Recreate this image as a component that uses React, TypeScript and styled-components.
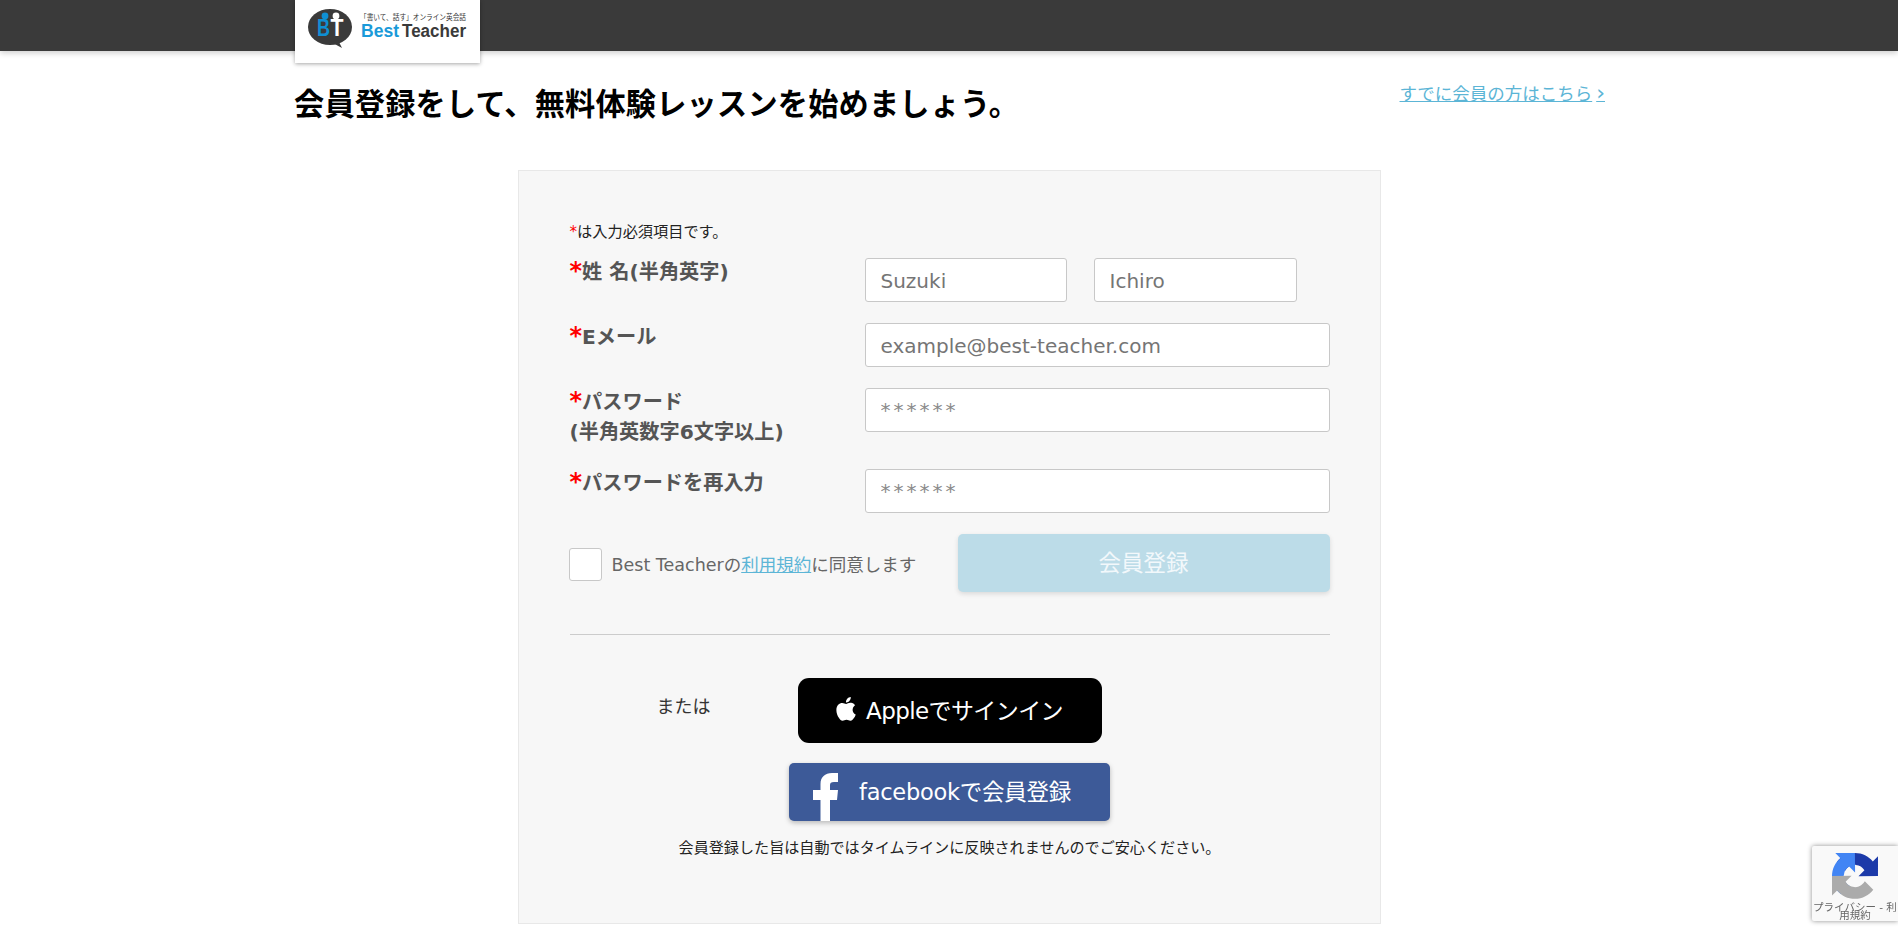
import React from "react";
import styled, { createGlobalStyle } from "styled-components";

const FONT = `"DejaVu Sans", "Noto Sans CJK JP", sans-serif`;

const Global = createGlobalStyle`
  html, body { margin: 0; padding: 0; background: #fff; height: 929px; overflow: hidden; }
  body { font-family: ${FONT}; color: #111; }
  * { box-sizing: border-box; }
`;

const Header = styled.header`
  height: 51px;
  background: #3a3a3a;
  box-shadow: 0 2px 6px rgba(0, 0, 0, 0.2);
`;
const HeaderInner = styled.div`
  width: 1310px;
  margin: 0 auto;
  padding-left: 1px;
`;
const LogoBox = styled.div`
  width: 185px;
  height: 63px;
  background: #fff;
  box-shadow: 0 1px 4px rgba(0, 0, 0, 0.35);
  position: relative;
`;
const Page = styled.main`
  width: 1310px;
  margin: 0 auto;
`;
const TitleRow = styled.div`
  display: flex;
  justify-content: space-between;
  align-items: flex-start;
  height: 119px;
`;
const Title = styled.h1`
  margin: 35px 0 0;
  font-size: 30.2px;
  letter-spacing: 0.2px;
  line-height: 38px;
  font-weight: 700;
  color: #000;
`;
const LoginLink = styled.a`
  margin-top: 31px;
  margin-right: -1px;
  font-size: 17.5px;
  line-height: 24px;
  color: #5cb5d6;
  text-decoration: underline;
`;
const Chevron = styled.span`
  margin-left: 4px;
  font-size: 22px;
  line-height: 0;
`;
const Card = styled.section`
  width: 863px;
  height: 754px;
  margin: 0 auto;
  padding: 50px 50px 0 51px;
  background: #f7f7f7;
  border: 1px solid #e8e8e8;
`;
const Note = styled.p`
  margin: 0 0 15px;
  font-size: 15.2px;
  line-height: 22px;
  color: #222;
`;
const Star = styled.span`
  color: #f00;
`;
const LabelStar = styled(Star)`
  font-size: 24px;
  line-height: 0;
`;
const Row = styled.div<{ $gap: number }>`
  display: grid;
  grid-template-columns: 295px 465px;
  margin-bottom: ${(p) => p.$gap}px;
`;
const Label = styled.label`
  margin-top: -1px;
  font-size: 20.2px;
  line-height: 30px;
  font-weight: 700;
  color: #555;
`;
const Inputs = styled.div`
  display: flex;
  gap: 27px;
`;
const Input = styled.input<{ $w?: number; $mask?: boolean }>`
  width: ${(p) => (p.$w ? `${p.$w}px` : "100%")};
  height: 44px;
  padding: ${(p) => (p.$mask ? "0 15px 1px" : "1px 15px 0")};
  font: 20px ${FONT};
  color: #555;
  background: #fff;
  border: 1px solid #c8c8c8;
  border-radius: 3px;
  outline: none;
  &::placeholder {
    color: ${(p) => (p.$mask ? "#8a8a8a" : "#757575")};
    opacity: 1;
    letter-spacing: ${(p) => (p.$mask ? "3px" : "0")};
  }
`;
const AgreeRow = styled.div`
  display: flex;
  align-items: center;
  justify-content: space-between;
  height: 58px;
`;
const Agree = styled.div`
  display: flex;
  align-items: center;
  gap: 10px;
  margin-left: -1px;
  padding-top: 3px;
`;
const Check = styled.span`
  width: 33px;
  height: 33px;
  background: #fff;
  border: 1px solid #c8c8c8;
  border-radius: 3px;
`;
const AgreeText = styled.span`
  font-size: 17.5px;
  color: #666;
  margin-top: -2px;
`;
const TermsLink = styled.a`
  color: #5cb5d6;
  text-decoration: underline;
`;
const Submit = styled.button`
  width: 372px;
  height: 58px;
  padding: 0 0 4px;
  border: 0;
  border-radius: 5px;
  background: #bcdce8;
  color: #f2f8fb;
  font: 22.5px ${FONT};
  box-shadow: 0 2px 5px rgba(0, 0, 0, 0.12);
`;
const Divider = styled.hr`
  margin: 42px 0 0;
  border: 0;
  border-top: 1px solid #ccc;
`;
const SocialArea = styled.div`
  position: relative;
  display: flex;
  flex-direction: column;
  align-items: center;
  padding-top: 43px;
`;
const Or = styled.span`
  position: absolute;
  left: 87px;
  top: 59px;
  font-size: 18px;
  line-height: 26px;
  color: #333;
`;
const AppleButton = styled.button`
  width: 304px;
  height: 65px;
  display: flex;
  align-items: center;
  justify-content: center;
  gap: 10px;
  padding: 0 0 3px;
  border: 0;
  border-radius: 11px;
  background: #000;
  color: #fff;
  font: 23px ${FONT};
  letter-spacing: -0.6px;
`;
const FacebookButton = styled.button`
  width: 321px;
  height: 58px;
  margin-top: 20px;
  display: flex;
  align-items: flex-end;
  padding: 0 0 0 24px;
  border: 0;
  border-radius: 5px;
  background: #3d5a98;
  color: #fff;
  font: 22.5px ${FONT};
  letter-spacing: -0.25px;
  box-shadow: 0 2px 5px rgba(0, 0, 0, 0.25);
`;
const FacebookLabel = styled.span`
  margin-left: 21px;
  align-self: center;
  padding-bottom: 4px;
  white-space: nowrap;
`;
const Disclaimer = styled.p`
  margin: 15px 0 0;
  font-size: 15.1px;
  line-height: 24px;
  color: #222;
`;
const Recaptcha = styled.aside`
  position: fixed;
  right: 0;
  top: 846px;
  width: 86px;
  height: 75px;
  background: #f9f9f9;
  border-radius: 2px 0 0 2px;
  box-shadow: 0 0 5px rgba(0, 0, 0, 0.45);
  display: flex;
  justify-content: center;
  padding-top: 7px;
`;
const RecaptchaText = styled.span`
  position: absolute;
  left: 0;
  right: 0;
  top: 57px;
  text-align: center;
  font-size: 10.5px;
  line-height: 8px;
  color: #666;
`;

const Logo = () => (
  <svg width="185" height="63" viewBox="0 0 185 63" role="img" aria-label="Best Teacher">
    <ellipse cx="35" cy="27" rx="22" ry="18" fill="#3a3a3a" />
    <path d="M36 42 L47 48 L43 40 Z" fill="#3a3a3a" />
    <circle cx="30" cy="16" r="3.4" fill="#0f8fd2" />
    <circle cx="41" cy="16" r="3.4" fill="#fff" />
    <text x="22" y="36" fontFamily="Liberation Sans" fontWeight="700" fontSize="23" fill="#0f8fd2" textLength="13" lengthAdjust="spacingAndGlyphs">B</text>
    <text x="35.500" y="36" fontFamily="Liberation Sans" fontWeight="700" fontSize="23" fill="#fff" textLength="13" lengthAdjust="spacingAndGlyphs">T</text>
    <text x="65" y="20" fontFamily="Noto Sans CJK JP" fontSize="7.5" fill="#333" textLength="106" lengthAdjust="spacingAndGlyphs">「書いて、話す」オンライン英会話</text>
    <text x="66" y="37" fontFamily="Liberation Sans" fontWeight="700" fontSize="18" fill="#1a9ad9" textLength="38" lengthAdjust="spacingAndGlyphs">Best</text>
    <text x="107" y="37" fontFamily="Liberation Sans" fontWeight="700" fontSize="18" fill="#3a3a3a" textLength="64" lengthAdjust="spacingAndGlyphs">Teacher</text>
  </svg>
);

const AppleIcon = () => (
  <svg width="20" height="24" viewBox="0 0 814 1000" fill="#fff" aria-hidden="true">
    <path d="M788 341c-6 4-106 61-106 187 0 146 128 197 132 199-1 3-20 71-68 140-42 61-86 122-154 122s-85-39-163-39c-76 0-103 41-165 41s-106-57-155-126C52 783 6 658 6 539c0-191 124-292 246-292 65 0 119 43 160 43 39 0 100-46 174-46 28 0 129 3 202 97zM554 159c31-36 52-87 52-137 0-7-1-14-2-20-50 2-109 33-145 75-28 32-54 82-54 134 0 8 1 16 2 18 3 1 9 2 14 2 45 0 102-30 133-72z" />
  </svg>
);

const FacebookF = () => (
  <svg width="25" height="48" viewBox="0 0 25 48" fill="#fff" aria-hidden="true">
    <path d="M7.500 48V27H0V17h7.500v-6C7.500 4 12 0 19 0h6v9h-4c-3 0-4 1-4 3v5h8l-1 10h-7v21z" />
  </svg>
);

const RecaptchaIcon = () => (
  <svg width="46" height="46" viewBox="0 0 64 64" aria-hidden="true">
    <path d="M64 31.955l-.033-1.37V4.687l-7.16 7.16C50.948 4.674 42.033.093 32.05.093c-10.4 0-19.622 4.96-25.458 12.64l11.736 11.86a15.55 15.55 0 0 1 4.75-5.328c2.05-1.6 4.952-2.9 9-2.9.48 0 .864.07 1.12.16a15.43 15.43 0 0 1 11.93 7.383l-8.307 8.307L64 31.953" fill="#1c3aa9" />
    <path d="M31.862 0l-1.37.033H4.594l7.16 7.16C4.58 13.052 0 21.967 0 31.95c0 10.4 4.96 19.622 12.64 25.458L24.5 45.672a15.55 15.55 0 0 1-5.328-4.75c-1.6-2.05-2.9-4.952-2.9-9 0-.48.07-.864.16-1.12a15.43 15.43 0 0 1 7.383-11.93l8.307 8.307L31.86 0" fill="#4285f4" />
    <path d="M0 31.953l.033 1.37v25.898l7.16-7.16C13.052 59.234 21.967 63.816 31.95 63.816c10.4 0 19.622-4.96 25.458-12.64L45.672 39.315a15.55 15.55 0 0 1-4.75 5.328c-2.05 1.6-4.952 2.9-9 2.9-.48 0-.864-.07-1.12-.16a15.43 15.43 0 0 1-11.93-7.383l8.307-8.307L0 31.953" fill="#ababab" />
  </svg>
);

export default function App() {
  return (
    <>
      <Global />
      <Header>
        <HeaderInner>
          <LogoBox>
            <Logo />
          </LogoBox>
        </HeaderInner>
      </Header>
      <Page>
        <TitleRow>
          <Title>会員登録をして、無料体験レッスンを始めましょう。</Title>
          <LoginLink href="#">
            すでに会員の方はこちら<Chevron>›</Chevron>
          </LoginLink>
        </TitleRow>
        <Card>
          <Note>
            <Star>*</Star>は入力必須項目です。
          </Note>
          <Row $gap={21}>
            <Label>
              <LabelStar>*</LabelStar>姓 名(半角英字)
            </Label>
            <Inputs>
              <Input $w={202} placeholder="Suzuki" />
              <Input $w={203} placeholder="Ichiro" />
            </Inputs>
          </Row>
          <Row $gap={21}>
            <Label>
              <LabelStar>*</LabelStar>Eメール
            </Label>
            <Input placeholder="example@best-teacher.com" />
          </Row>
          <Row $gap={22}>
            <Label>
              <LabelStar>*</LabelStar>パスワード
              <br />
              (半角英数字6文字以上)
            </Label>
            <Input $mask type="password" placeholder="******" />
          </Row>
          <Row $gap={21}>
            <Label>
              <LabelStar>*</LabelStar>パスワードを再入力
            </Label>
            <Input $mask type="password" placeholder="******" />
          </Row>
          <AgreeRow>
            <Agree>
              <Check />
              <AgreeText>
                Best Teacherの<TermsLink href="#">利用規約</TermsLink>に同意します
              </AgreeText>
            </Agree>
            <Submit type="button">会員登録</Submit>
          </AgreeRow>
          <Divider />
          <SocialArea>
            <Or>または</Or>
            <AppleButton type="button">
              <AppleIcon />
              Appleでサインイン
            </AppleButton>
            <FacebookButton type="button">
              <FacebookF />
              <FacebookLabel>facebookで会員登録</FacebookLabel>
            </FacebookButton>
            <Disclaimer>会員登録した旨は自動ではタイムラインに反映されませんのでご安心ください。</Disclaimer>
          </SocialArea>
        </Card>
      </Page>
      <Recaptcha>
        <RecaptchaIcon />
        <RecaptchaText>プライバシー - 利用規約</RecaptchaText>
      </Recaptcha>
    </>
  );
}
